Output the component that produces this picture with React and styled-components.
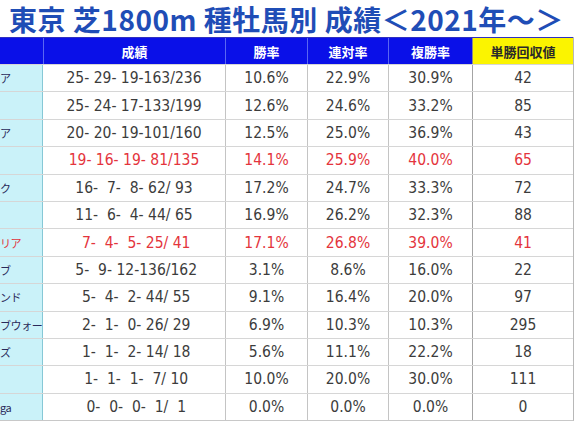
import React from "react";
import styled, { createGlobalStyle } from "styled-components";

const Global = createGlobalStyle`
  html, body { margin: 0; padding: 0; background: #ffffff; }
  body { width: 576px; height: 430px; overflow: hidden; }
`;

const COLS = "43px 182px 82px 81px 84px 101px";

const Page = styled.div`
  width: 576px;
  height: 430px;
  display: flex;
  flex-direction: column;
  background: #fff;
`;

const Title = styled.h1`
  margin: 0;
  height: 37px;
  padding-left: 9px;
  display: flex;
  align-items: center;
  font-family: "Noto Sans CJK JP", "Noto Sans", sans-serif;
  font-weight: 700;
  font-size: 28px;
  letter-spacing: 0.5px;
  color: #1f4db6;
  white-space: pre;
  line-height: 1;
`;

const Table = styled.div`
  width: 573px;
  display: flex;
  flex-direction: column;
  border-right: 1px solid #b8b8b8;
  border-bottom: 1px solid #c8c8c8;
`;

const HeadRow = styled.div`
  display: grid;
  grid-template-columns: ${COLS};
  height: 26px;
  border-top: 1px solid #3030c0;
`;

const HeadCell = styled.div`
  display: flex;
  align-items: center;
  justify-content: center;
  background: ${(p) => (p.$yellow ? "#fbf400" : "#0a10e8")};
  color: ${(p) => (p.$yellow ? "#2a2a2a" : "#ffffff")};
  border-left: ${(p) => (p.$first ? "none" : p.$yellow ? "1px solid #8a8a8a" : "1px solid #5a66f2")};
  font-family: "Noto Sans CJK JP", sans-serif;
  font-weight: 700;
  font-size: 13px;
`;

const Row = styled.div`
  display: grid;
  grid-template-columns: ${COLS};
  height: 27.4px;
  border-top: 1px solid #d6d6d6;
  box-sizing: border-box;
`;

const NameCell = styled.div`
  background: #caf2f9;
  border-right: 1px solid #86c8d6;
  display: flex;
  align-items: center;
  overflow: hidden;
  font-family: "Noto Sans CJK JP", sans-serif;
  font-size: 11px;
  letter-spacing: -0.4px;
  color: ${(p) => (p.$red ? "#e0343c" : "#2a2a5a")};
  white-space: nowrap;
`;

const Cell = styled.div`
  display: flex;
  align-items: center;
  justify-content: center;
  white-space: pre;
  font-family: "DejaVu Sans Condensed", "DejaVu Sans", sans-serif;
  font-stretch: condensed;
  font-size: 15.5px;
  color: ${(p) => (p.$red ? "#e4343c" : "#3c3c3c")};
  border-left: ${(p) => (p.$first ? "none" : p.$strong ? "1px solid #a4a4a4" : "1px solid #c4c4c4")};
`;

const rows = [
  ["ア", [25, 29, 19, 163, 236], "10.6%", "22.9%", "30.9%", "42"],
  ["", [25, 24, 17, 133, 199], "12.6%", "24.6%", "33.2%", "85"],
  ["ア", [20, 20, 19, 101, 160], "12.5%", "25.0%", "36.9%", "43"],
  ["", [19, 16, 19, 81, 135], "14.1%", "25.9%", "40.0%", "65", true],
  ["ク", [16, 7, 8, 62, 93], "17.2%", "24.7%", "33.3%", "72"],
  ["", [11, 6, 4, 44, 65], "16.9%", "26.2%", "32.3%", "88"],
  ["リア", [7, 4, 5, 25, 41], "17.1%", "26.8%", "39.0%", "41", true],
  ["ブ", [5, 9, 12, 136, 162], "3.1%", "8.6%", "16.0%", "22"],
  ["ンド", [5, 4, 2, 44, 55], "9.1%", "16.4%", "20.0%", "97"],
  ["ブウォー", [2, 1, 0, 26, 29], "6.9%", "10.3%", "10.3%", "295"],
  ["ズ", [1, 1, 2, 14, 18], "5.6%", "11.1%", "22.2%", "18"],
  ["", [1, 1, 1, 7, 10], "10.0%", "20.0%", "30.0%", "111"],
  ["ga", [0, 0, 0, 1, 1], "0.0%", "0.0%", "0.0%", "0"],
];

const pad = (n, w) => String(n).padStart(w, " ");
const record = ([a, b, c, d, e]) =>
  `${pad(a, 2)}- ${pad(b, 2)}- ${pad(c, 2)}-${pad(d, 3)}/${pad(e, 3)}`;

export default function App() {
  return (
    <Page>
      <Global />
      <Title>東京 芝1800m 種牡馬別 成績＜2021年～＞</Title>
      <Table>
        <HeadRow>
          <HeadCell $first />
          <HeadCell>成績</HeadCell>
          <HeadCell>勝率</HeadCell>
          <HeadCell>連対率</HeadCell>
          <HeadCell>複勝率</HeadCell>
          <HeadCell $yellow>単勝回収値</HeadCell>
        </HeadRow>
        {rows.map(([name, rec, w, r, p, y, red], i) => (
          <Row key={i}>
            <NameCell $red={red}>{name}</NameCell>
            <Cell $first $red={red}>{record(rec)}</Cell>
            <Cell $red={red}>{w}</Cell>
            <Cell $red={red}>{r}</Cell>
            <Cell $red={red}>{p}</Cell>
            <Cell $strong $red={red}>{y}</Cell>
          </Row>
        ))}
      </Table>
    </Page>
  );
}
